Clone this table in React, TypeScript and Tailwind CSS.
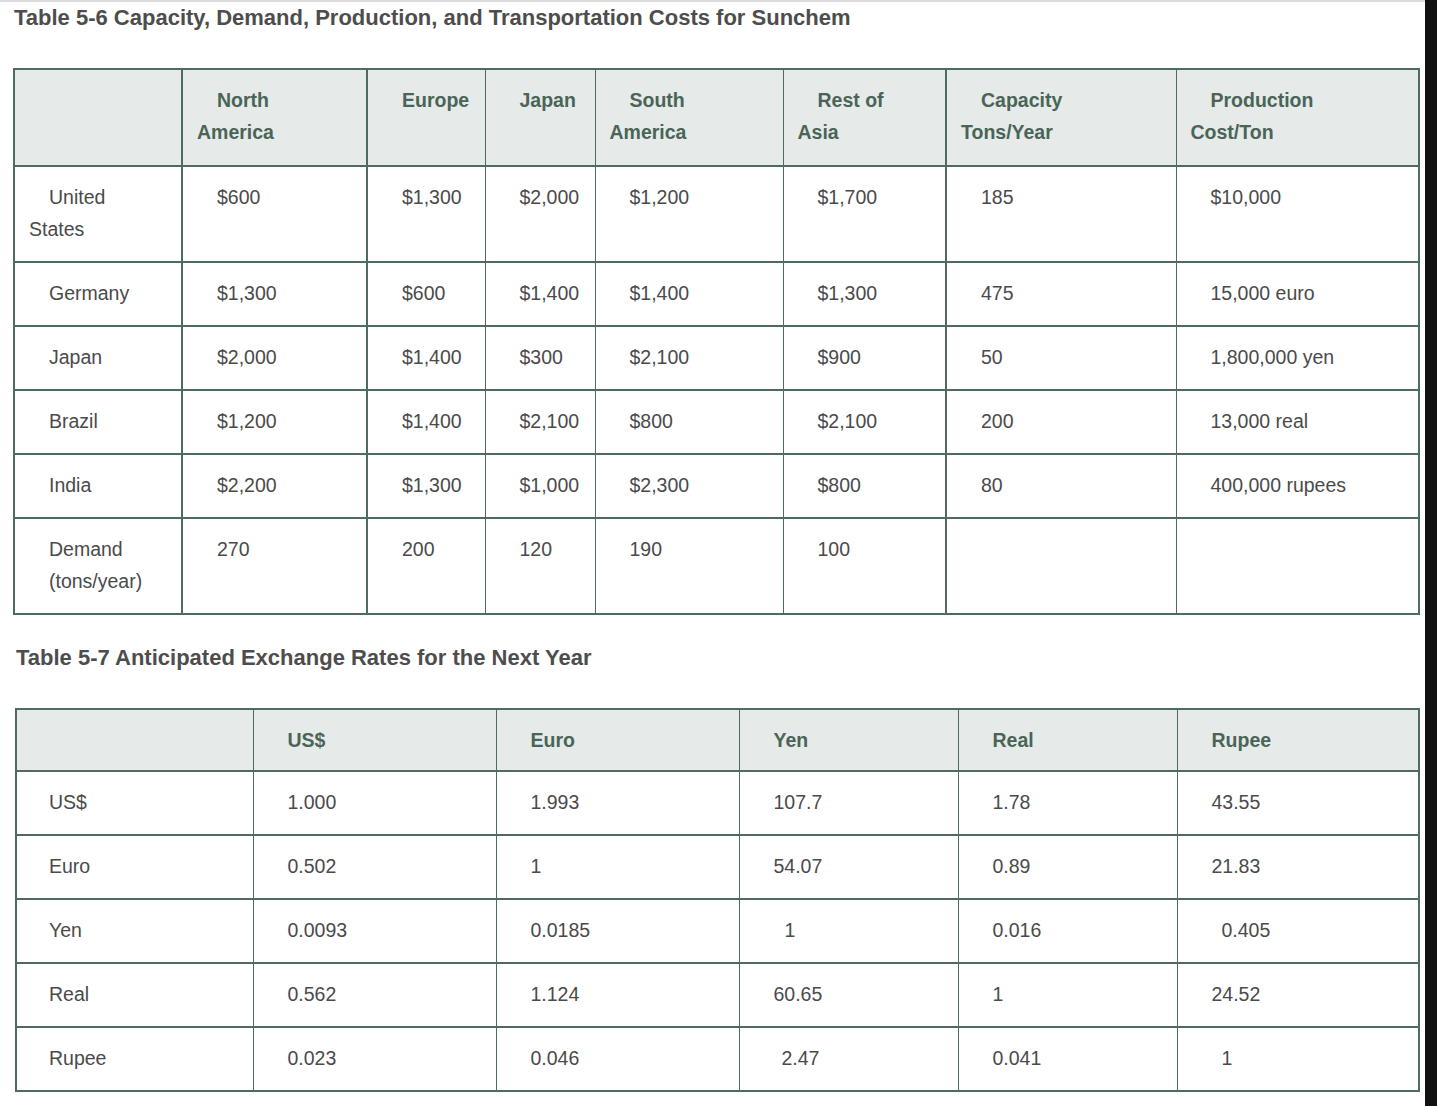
import React from "react";

const B = "border-[#4f6a60]";

type Cell = { t: React.ReactNode; ml?: string };

const t1Cols = ["w-[168px]", "w-[185px]", "w-[118px]", "w-[110px]", "w-[188px]", "w-[163px]", "w-[230px]", "w-[243px]"];
const t1Left = ["border-l-2", "border-l-2", "border-l-2", "border-l", "border-l", "border-l", "border-l-2", "border-l"];

const t1Head: React.ReactNode[] = [
  "",
  <>North<br />America</>,
  "Europe",
  "Japan",
  <>South<br />America</>,
  <>Rest of<br />Asia</>,
  <>Capacity<br />Tons/Year</>,
  <>Production<br />Cost/Ton</>,
];

const t1Rows: React.ReactNode[][] = [
  [<>United<br />States</>, "$600", "$1,300", "$2,000", "$1,200", "$1,700", "185", "$10,000"],
  ["Germany", "$1,300", "$600", "$1,400", "$1,400", "$1,300", "475", "15,000 euro"],
  ["Japan", "$2,000", "$1,400", "$300", "$2,100", "$900", "50", "1,800,000 yen"],
  ["Brazil", "$1,200", "$1,400", "$2,100", "$800", "$2,100", "200", "13,000 real"],
  ["India", "$2,200", "$1,300", "$1,000", "$2,300", "$800", "80", "400,000 rupees"],
  [
    <>
      <div>Demand</div>
      <div>(tons/year)</div>
    </>,
    "270",
    "200",
    "120",
    "190",
    "100",
    "",
    "",
  ],
];

const t2Cols = ["w-[237px]", "w-[243px]", "w-[243px]", "w-[219px]", "w-[219px]", "w-[242px]"];
const t2Head = ["", "US$", "Euro", "Yen", "Real", "Rupee"];
const t2Rows: Cell[][] = [
  [{ t: "US$" }, { t: "1.000" }, { t: "1.993" }, { t: "107.7" }, { t: "1.78" }, { t: "43.55" }],
  [{ t: "Euro" }, { t: "0.502" }, { t: "1" }, { t: "54.07" }, { t: "0.89" }, { t: "21.83" }],
  [{ t: "Yen" }, { t: "0.0093" }, { t: "0.0185" }, { t: "1", ml: "ml-[11px]" }, { t: "0.016" }, { t: "0.405", ml: "ml-[10px]" }],
  [{ t: "Real" }, { t: "0.562" }, { t: "1.124" }, { t: "60.65" }, { t: "1" }, { t: "24.52" }],
  [{ t: "Rupee" }, { t: "0.023" }, { t: "0.046" }, { t: "2.47", ml: "ml-[8px]" }, { t: "0.041" }, { t: "1", ml: "ml-[10px]" }],
];

export default function App() {
  return (
    <div className="flex min-h-[1106px] w-[1437px] bg-white font-['Liberation_Sans',Arial,sans-serif]">
      <div className="flex w-[1425px] flex-col">
        <div className="h-[2px] bg-[#dcdcdc]" />
        <h2 className="ml-[14px] mt-[4px] text-[22px] font-bold leading-[24px] text-[#4d4d4d]">
          Table 5-6 Capacity, Demand, Production, and Transportation Costs for Sunchem
        </h2>
        <table className={`ml-[13px] mt-[38px] w-[1405px] table-fixed border-collapse border-2 ${B} text-[19.5px] leading-[32px] text-[#4a4a4a]`}>
          <colgroup>
            {t1Cols.map((c, i) => (
              <col key={i} className={c} />
            ))}
          </colgroup>
          <thead>
            <tr className="bg-[#e6eae9]">
              {t1Head.map((h, i) => (
                <th
                  key={i}
                  className={`${t1Left[i]} border-b-2 ${B} px-[14px] pt-[14px] pb-[17px] text-left align-top indent-5 font-bold text-[#4a6457]`}
                >
                  {h}
                </th>
              ))}
            </tr>
          </thead>
          <tbody>
            {t1Rows.map((r, ri) => (
              <tr key={ri}>
                {r.map((c, ci) => (
                  <td
                    key={ci}
                    className={`${t1Left[ci]} border-b-2 ${B} px-[14px] pt-[14px] pb-[16px] align-top indent-5`}
                  >
                    {c === "" ? "\u00a0" : c}
                  </td>
                ))}
              </tr>
            ))}
          </tbody>
        </table>

        <h2 className="ml-[16px] mt-[31px] text-[22px] font-bold leading-[24px] text-[#4d4d4d]">
          Table 5-7 Anticipated Exchange Rates for the Next Year
        </h2>

        <table className={`ml-[15px] mt-[38px] w-[1403px] table-fixed border-collapse border-2 ${B} text-[19.5px] leading-[32px] text-[#4a4a4a]`}>
          <colgroup>
            {t2Cols.map((c, i) => (
              <col key={i} className={c} />
            ))}
          </colgroup>
          <thead>
            <tr className="bg-[#e6eae9]">
              {t2Head.map((h, i) => (
                <th
                  key={i}
                  className={`border-l border-b-2 ${B} px-[14px] pt-[14px] pb-[14px] text-left align-top indent-5 font-bold text-[#4a6457]`}
                >
                  {h === "" ? "\u00a0" : h}
                </th>
              ))}
            </tr>
          </thead>
          <tbody>
            {t2Rows.map((r, ri) => (
              <tr key={ri}>
                {r.map((c, ci) => (
                  <td
                    key={ci}
                    className={`border-l border-b-2 ${B} pr-[14px] ${ci === 0 ? "pl-[12px]" : "pl-[14px]"} pt-[14px] pb-[16px] align-top indent-5`}
                  >
                    <span className={c.ml ?? ""}>{c.t}</span>
                  </td>
                ))}
              </tr>
            ))}
          </tbody>
        </table>
      </div>
      <div className="w-[12px] bg-[#111111]" />
    </div>
  );
}
